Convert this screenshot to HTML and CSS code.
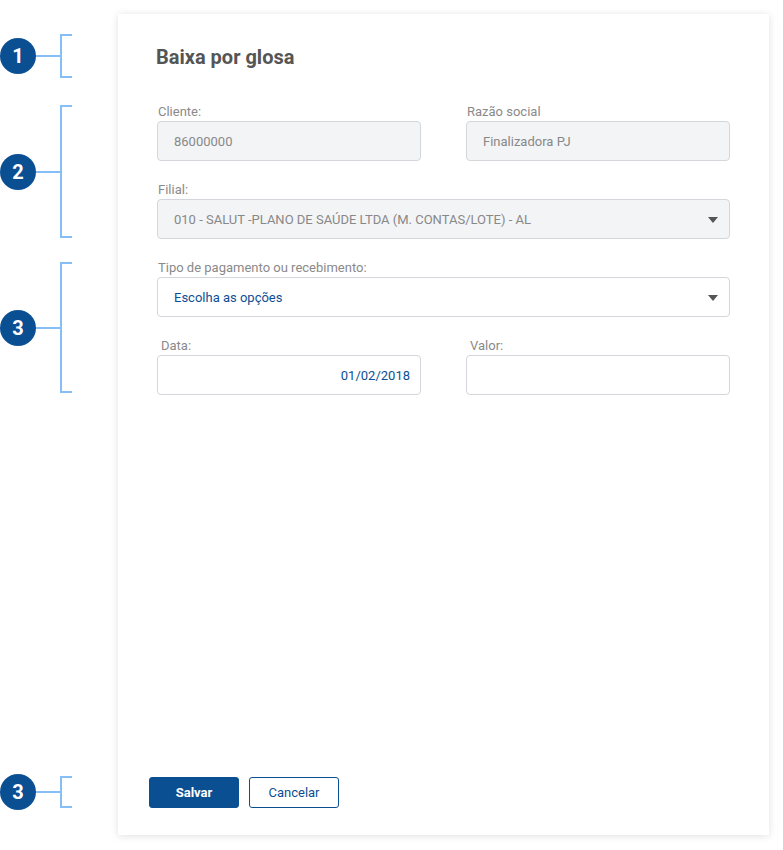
FILE: index.html
```html
<!DOCTYPE html>
<html lang="pt">
<head>
<meta charset="utf-8">
<link rel="stylesheet" href="styles.css">
</head>
<body>
<div class="page">
  <div class="notes">
    <div class="note note-1"><span class="badge">1</span><span class="stem"></span><span class="bracket"></span></div>
    <div class="note note-2"><span class="badge">2</span><span class="stem"></span><span class="bracket"></span></div>
    <div class="note note-3"><span class="badge">3</span><span class="stem"></span><span class="bracket"></span></div>
    <div class="note note-4"><span class="badge">3</span><span class="stem"></span><span class="bracket"></span></div>
  </div>
  <div class="card">
    <h1 class="title">Baixa por glosa</h1>
    <div class="form">
      <div class="row two">
        <div class="field">
          <label class="label">Cliente:</label>
          <div class="input disabled">86000000</div>
        </div>
        <div class="field">
          <label class="label">Razão social</label>
          <div class="input disabled">Finalizadora PJ</div>
        </div>
      </div>
      <div class="row">
        <div class="field">
          <label class="label">Filial:</label>
          <div class="input disabled select">010 - SALUT -PLANO DE SAÚDE LTDA (M. CONTAS/LOTE) - AL<span class="caret"></span></div>
        </div>
      </div>
      <div class="row">
        <div class="field">
          <label class="label">Tipo de pagamento ou recebimento:</label>
          <div class="input select value">Escolha as opções<span class="caret"></span></div>
        </div>
      </div>
      <div class="row two">
        <div class="field">
          <label class="label indent">Data:</label>
          <div class="input value right">01/02/2018</div>
        </div>
        <div class="field">
          <label class="label indent">Valor:</label>
          <div class="input"></div>
        </div>
      </div>
    </div>
    <div class="actions">
      <button class="btn primary">Salvar</button>
      <button class="btn secondary">Cancelar</button>
    </div>
  </div>
</div>
</body>
</html>
```
FILE: styles.css
```css
* { box-sizing: border-box; }
html, body { margin: 0; padding: 0; background: #fff; }
body { font-family: Roboto, "Liberation Sans", Arial, sans-serif; }

.page {
  display: flex;
  width: 783px;
  height: 850px;
}

.notes {
  width: 118px;
  flex: none;
  display: flex;
  flex-direction: column;
  padding-top: 34px;
}
.note {
  display: flex;
  align-items: center;
}
.note-1 { height: 44px; }
.note-2 { height: 133px; margin-top: 27px; }
.note-3 { height: 131px; margin-top: 24px; }
.note-4 { height: 32px; margin-top: 383px; }

.badge {
  width: 36px;
  height: 36px;
  border-radius: 50%;
  background: #0b4f93;
  color: #fff;
  font-weight: 700;
  font-size: 20px;
  display: flex;
  align-items: center;
  justify-content: center;
  flex: none;
}
.stem {
  width: 24px;
  height: 2px;
  background: #86bff8;
  flex: none;
}
.bracket {
  width: 12px;
  height: 100%;
  border: 2px solid #86bff8;
  border-right: none;
  flex: none;
}

.card {
  margin-top: 14px;
  width: 651px;
  height: 821px;
  background: #fff;
  box-shadow: 0 1px 8px rgba(0, 0, 0, 0.12);
  display: flex;
  flex-direction: column;
  padding: 0 39px 27px 39px;
}

.title {
  margin: 31px 0 0 -1px;
  font-size: 20px;
  line-height: 24px;
  font-weight: 700;
  color: #555;
}

.form {
  margin-top: 35px;
  display: flex;
  flex-direction: column;
  gap: 21px;
  flex: 1;
}
.row { display: flex; }
.row.two { gap: 45px; }
.row .field { flex: 1; }
.field {
  display: flex;
  flex-direction: column;
  gap: 1px;
}
.label {
  font-size: 13px;
  line-height: 16px;
  color: #8a8a8a;
  padding-left: 1px;
}
.label.indent { padding-left: 4px; }

.input {
  height: 40px;
  border: 1px solid #d3d6da;
  border-radius: 4px;
  background: #fff;
  display: flex;
  align-items: center;
  padding: 0 16px;
  font-size: 13px;
  color: #888;
  position: relative;
}
.input.disabled { background: #f3f4f6; }
.input.value { color: #0d4f94; }
.input.right { justify-content: flex-end; padding-right: 10px; }
.caret {
  position: absolute;
  right: 11px;
  top: 17px;
  width: 0;
  height: 0;
  border-left: 5px solid transparent;
  border-right: 5px solid transparent;
  border-top: 6px solid #555;
}

.actions {
  display: flex;
  gap: 10px;
  margin-left: -8px;
}
.btn {
  width: 90px;
  height: 31px;
  border-radius: 3px;
  font-family: Roboto, "Liberation Sans", Arial, sans-serif;
  font-size: 13px;
  cursor: pointer;
}
.btn.primary {
  background: #0b4f93;
  border: 1px solid #0b4f93;
  color: #fff;
  font-weight: 700;
}
.btn.secondary {
  background: #fff;
  border: 1px solid #0b4f93;
  color: #0b4f93;
}
```
